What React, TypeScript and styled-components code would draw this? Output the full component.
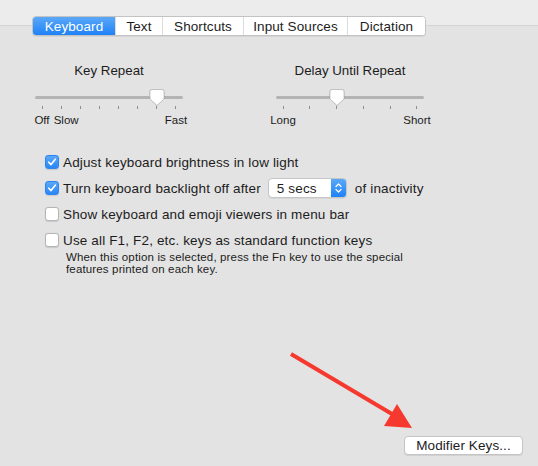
import React from 'react'
import styled, { createGlobalStyle } from 'styled-components'

const GlobalStyle = createGlobalStyle`
  html, body {
    margin: 0;
    padding: 0;
  }
  body {
    font-family: "Liberation Sans", Arial, sans-serif;
    color: #1c1c1c;
    -webkit-font-smoothing: antialiased;
  }
`

const Page = styled.div`
  position: relative;
  width: 538px;
  height: 466px;
  box-sizing: border-box;
  display: flex;
  flex-direction: column;
  overflow: hidden;
  background: linear-gradient(
    to bottom,
    #ececec 0,
    #ececec 25px,
    #d3d3d3 25px,
    #d3d3d3 26px,
    #e3e3e3 26px
  );
`

const TabBar = styled.div`
  display: flex;
  align-self: flex-start;
  margin: 16px 0 0 32px;
  height: 20px;
  box-sizing: border-box;
  border: 1px solid #c3c3c3;
  border-radius: 4px;
  background: #fff;
  box-shadow: 0 1px 0 rgba(0, 0, 0, 0.06);
  overflow: hidden;
`

const Tab = styled.div<{ $active?: boolean; $w: number }>`
  display: flex;
  align-items: center;
  justify-content: center;
  width: ${(p) => p.$w}px;
  box-sizing: border-box;
  font-size: 13.5px;
  letter-spacing: 0.1px;
  color: ${(p) => (p.$active ? '#fff' : '#1c1c1c')};
  background: ${(p) =>
    p.$active ? 'linear-gradient(to bottom, #5ba8f9, #1f82f6)' : '#fff'};
  & + & {
    border-left: 1px solid #dcdcdc;
  }
`

const SliderRow = styled.div`
  display: flex;
  gap: 93px;
  margin: 27px 0 0 35px;
`

const SliderBox = styled.div`
  width: 148px;
  display: flex;
  flex-direction: column;
`

const SliderTitle = styled.div`
  text-align: center;
  font-size: 13.3px;
  line-height: 16px;
`

const Track = styled.div`
  position: relative;
  height: 18px;
  margin-top: 9px;
  &::before {
    content: '';
    position: absolute;
    left: 0;
    right: 0;
    top: 8px;
    height: 3px;
    border-radius: 2px;
    background: #b4b4b4;
  }
`

const Thumb = styled.svg`
  position: absolute;
  top: 0;
  width: 16px;
  height: 19px;
  margin-left: -8px;
  overflow: visible;
  filter: drop-shadow(0 0.5px 0.6px rgba(0, 0, 0, 0.25));
`

const Ticks = styled.div`
  display: flex;
  justify-content: space-between;
  padding: 0 6.5px;
  height: 3px;
`

const Tick = styled.span`
  width: 1px;
  height: 3px;
  background: #8c8c8c;
`

const Labels = styled.div`
  position: relative;
  height: 13px;
  margin-top: 5px;
`

const TickLabel = styled.span`
  position: absolute;
  top: 0;
  font-size: 11.5px;
  line-height: 13px;
  transform: translateX(-50%);
  white-space: nowrap;
`

const Options = styled.div`
  display: flex;
  flex-direction: column;
  gap: 6px;
  margin: 25px 0 0 45px;
`

const OptionRow = styled.label`
  display: flex;
  align-items: center;
  height: 20px;
  font-size: 13.5px;
  letter-spacing: 0.15px;
  white-space: nowrap;
`

const Box = styled.span<{ $checked?: boolean }>`
  display: flex;
  align-items: center;
  justify-content: center;
  width: 14px;
  height: 14px;
  box-sizing: border-box;
  margin-right: 4px;
  border-radius: 3px;
  border: 1px solid ${(p) => (p.$checked ? '#2f86f3' : '#b5b5b5')};
  background: ${(p) =>
    p.$checked ? 'linear-gradient(to bottom, #5aa7f8, #2a86f5)' : '#fff'};
  box-shadow: 0 0.5px 1px rgba(0, 0, 0, 0.12);
`

const Popup = styled.div`
  display: flex;
  align-items: stretch;
  width: 79px;
  height: 20px;
  box-sizing: border-box;
  margin: 0 8px 0 7px;
  border: 1px solid #c6c6c6;
  border-radius: 4px;
  background: #fff;
  box-shadow: 0 1px 0 rgba(0, 0, 0, 0.05);
  overflow: hidden;
`

const PopupValue = styled.span`
  flex: 1;
  display: flex;
  align-items: center;
  padding-left: 8px;
`

const Stepper = styled.span`
  width: 15px;
  display: flex;
  align-items: center;
  justify-content: center;
  background: linear-gradient(to bottom, #5ba8f9, #1f82f6);
`

const Help = styled.div`
  margin: 1px 0 0 66px;
  font-size: 11.5px;
  letter-spacing: 0.15px;
  line-height: 12px;
`

const Spacer = styled.div`
  flex: 1;
`

const Footer = styled.div`
  display: flex;
  justify-content: flex-end;
  padding: 0 15px 11px 0;
`

const Button = styled.button`
  width: 119px;
  height: 19px;
  padding: 0;
  box-sizing: border-box;
  border: 1px solid #c4c4c4;
  border-radius: 4px;
  background: #fff;
  box-shadow: 0 1px 0 rgba(0, 0, 0, 0.08);
  font-family: inherit;
  font-size: 13.5px;
  letter-spacing: 0.1px;
  color: #1c1c1c;
`

const Annotation = styled.svg`
  position: absolute;
  left: 0;
  top: 0;
  pointer-events: none;
`

type SliderProps = {
  title: string
  ticks: number
  value: number
  labels: { text: string; at: number; shift?: number }[]
}

const Slider: React.FC<SliderProps> = ({ title, ticks, value, labels }) => {
  // thumb and labels sit on the tick positions, inset 7px from the track ends
  const pos = (i: number) => `calc(7px + (100% - 14px) * ${i / (ticks - 1)})`
  return (
    <SliderBox>
      <SliderTitle>{title}</SliderTitle>
      <Track>
        <Thumb style={{ left: pos(value) }} viewBox="0 0 16 19">
          <path
            d="M3 1.5 H13 Q15 1.5 15 3.5 V11 L8 17.5 L1 11 V3.5 Q1 1.5 3 1.5 Z"
            fill="#fff"
            stroke="#bdbdbd"
            strokeWidth="0.8"
          />
        </Thumb>
      </Track>
      <Ticks>
        {Array.from({ length: ticks }).map((_, i) => (
          <Tick key={i} />
        ))}
      </Ticks>
      <Labels>
        {labels.map((l) => (
          <TickLabel
            key={l.text}
            style={{ left: `calc(${pos(l.at)} + ${l.shift ?? 0}px)` }}
          >
            {l.text}
          </TickLabel>
        ))}
      </Labels>
    </SliderBox>
  )
}

const Check = () => (
  <svg width="10" height="10" viewBox="0 0 10 10">
    <path
      d="M1.8 5.2 L4 7.6 L8.3 2.2"
      fill="none"
      stroke="#fff"
      strokeWidth="1.6"
      strokeLinecap="round"
      strokeLinejoin="round"
    />
  </svg>
)

const Option: React.FC<{ checked?: boolean; children: React.ReactNode }> = ({
  checked,
  children,
}) => (
  <OptionRow>
    <Box $checked={checked}>{checked && <Check />}</Box>
    {children}
  </OptionRow>
)

const tabs = [
  { name: 'Keyboard', w: 82 },
  { name: 'Text', w: 48 },
  { name: 'Shortcuts', w: 82 },
  { name: 'Input Sources', w: 105 },
  { name: 'Dictation', w: 79 },
]

export default function App() {
  return (
    <Page>
      <GlobalStyle />
      <TabBar>
        {tabs.map((t, i) => (
          <Tab key={t.name} $w={i === 0 ? 82 : t.w - 1} $active={i === 0}>
            {t.name}
          </Tab>
        ))}
      </TabBar>

      <SliderRow>
        <Slider
          title="Key Repeat"
          ticks={8}
          value={6}
          labels={[
            { text: 'Off', at: 0 },
            { text: 'Slow', at: 1, shift: 5 },
            { text: 'Fast', at: 7 },
          ]}
        />
        <Slider
          title="Delay Until Repeat"
          ticks={6}
          value={2}
          labels={[
            { text: 'Long', at: 0 },
            { text: 'Short', at: 5 },
          ]}
        />
      </SliderRow>

      <Options>
        <Option checked>Adjust keyboard brightness in low light</Option>
        <Option checked>
          Turn keyboard backlight off after
          <Popup>
            <PopupValue>5 secs</PopupValue>
            <Stepper>
              <svg width="7" height="12" viewBox="0 0 7 12">
                <path
                  d="M1 4.5 L3.5 2 L6 4.5 M1 7.5 L3.5 10 L6 7.5"
                  fill="none"
                  stroke="#fff"
                  strokeWidth="1.2"
                  strokeLinecap="round"
                  strokeLinejoin="round"
                />
              </svg>
            </Stepper>
          </Popup>
          of inactivity
        </Option>
        <Option>Show keyboard and emoji viewers in menu bar</Option>
        <Option>Use all F1, F2, etc. keys as standard function keys</Option>
      </Options>
      <Help>
        When this option is selected, press the Fn key to use the special
        <br />
        features printed on each key.
      </Help>

      <Spacer />
      <Footer>
        <Button type="button">Modifier Keys...</Button>
      </Footer>

      <Annotation width="538" height="466" viewBox="0 0 538 466">
        <line
          x1="291"
          y1="354"
          x2="392"
          y2="414"
          stroke="#f6392f"
          strokeWidth="4"
        />
        <polygon points="412,428 384,426 397,404" fill="#f6392f" />
      </Annotation>
    </Page>
  )
}
